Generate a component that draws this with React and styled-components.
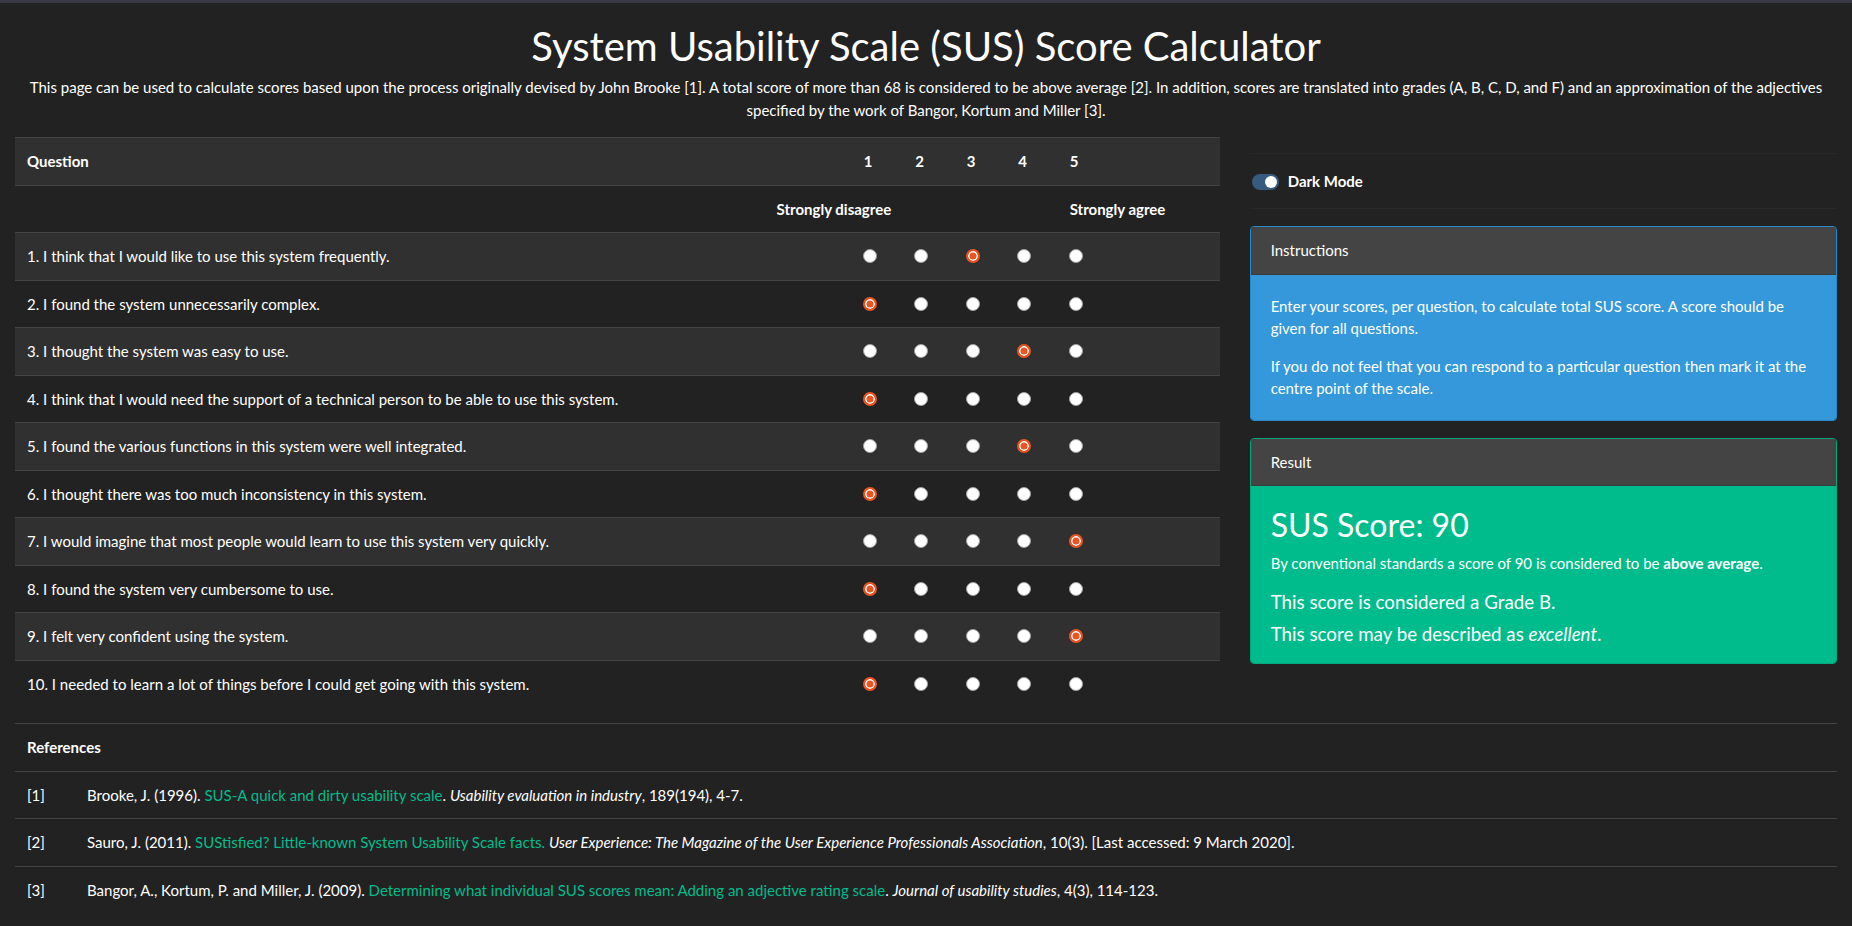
import React, { useState } from "react";
import styled, { createGlobalStyle } from "styled-components";

const GlobalStyle = createGlobalStyle`
  html, body {
    margin: 0;
    padding: 0;
    background: #222;
    overflow: hidden;
  }
  body {
    color: #fff;
    font-family: Lato, "Open Sans", sans-serif;
    font-size: 15px;
    line-height: 1.5;
  }
  * { box-sizing: border-box; }
`;

const questions = [
  "I think that I would like to use this system frequently.",
  "I found the system unnecessarily complex.",
  "I thought the system was easy to use.",
  "I think that I would need the support of a technical person to be able to use this system.",
  "I found the various functions in this system were well integrated.",
  "I thought there was too much inconsistency in this system.",
  "I would imagine that most people would learn to use this system very quickly.",
  "I found the system very cumbersome to use.",
  "I felt very confident using the system.",
  "I needed to learn a lot of things before I could get going with this system.",
];

const COLS = "1fr repeat(5, 51.5px) 110.5px";

const gradeFor = (s) => {
  if (s > 90) return "A";
  if (s > 80) return "B";
  if (s > 68) return "C";
  if (s > 51) return "D";
  return "F";
};

const adjectiveFor = (s) => {
  if (s >= 85.5) return "excellent";
  if (s >= 72.75) return "good";
  if (s >= 52) return "ok";
  if (s >= 39) return "poor";
  return "awful";
};

export default function App() {
  const [answers, setAnswers] = useState([3, 1, 4, 1, 4, 1, 5, 1, 5, 1]);
  const [dark, setDark] = useState(true);

  const score =
    answers.reduce((sum, a, i) => sum + (i % 2 === 0 ? a - 1 : 5 - a), 0) *
    2.5;

  const pick = (q, v) => {
    const next = [...answers];
    next[q] = v;
    setAnswers(next);
  };

  return (
    <>
      <GlobalStyle />
      <TopBar />
      <Page>
        <Title>System Usability Scale (SUS) Score Calculator</Title>
        <Intro>
          This page can be used to calculate scores based upon the process
          originally devised by John Brooke [1]. A total score of more than 68
          is considered to be above average [2]. In addition, scores are
          translated into grades (A, B, C, D, and F) and an approximation of
          the adjectives specified by the work of Bangor, Kortum and Miller [3].
        </Intro>

        <Columns>
          <MainCol>
            <QuestionTable>
              <QRow $shade>
                <Cell $bold>Question</Cell>
                {[1, 2, 3, 4, 5].map((n) => (
                  <Cell key={n} $bold>
                    {n}
                  </Cell>
                ))}
                <Cell />
              </QRow>
              <QRow>
                <Cell $bold $span={2} $align="right">
                  Strongly disagree
                </Cell>
                <Cell $span={3} />
                <Cell $bold $span={2}>
                  Strongly agree
                </Cell>
              </QRow>
              {questions.map((q, i) => (
                <QRow key={i} $shade={i % 2 === 0}>
                  <Cell>
                    {i + 1}. {q}
                  </Cell>
                  {[1, 2, 3, 4, 5].map((v) => (
                    <Cell key={v} $center>
                      <Radio
                        type="radio"
                        name={"q" + i}
                        checked={answers[i] === v}
                        onChange={() => pick(i, v)}
                      />
                    </Cell>
                  ))}
                  <Cell />
                </QRow>
              ))}
            </QuestionTable>
          </MainCol>

          <SideCol>
            <ToggleRow>
              <Switch>
                <input
                  type="checkbox"
                  checked={dark}
                  onChange={() => setDark(!dark)}
                />
                <Track $on={dark} />
                Dark Mode
              </Switch>
            </ToggleRow>

            <Card $border="#2d88c8">
              <CardHeader>Instructions</CardHeader>
              <CardBody $bg="#3498db">
                <CardText>
                  Enter your scores, per question, to calculate total SUS
                  score. A score should be given for all questions.
                </CardText>
                <CardText>
                  If you do not feel that you can respond to a particular
                  question then mark it at the centre point of the scale.
                </CardText>
              </CardBody>
            </Card>

            <Card $border="#00a87d">
              <CardHeader>Result</CardHeader>
              <CardBody $bg="#00bc8c" $top="21px" $bottom="17px">
                <Score>SUS Score: {score}</Score>
                <Verdict>
                  By conventional standards a score of {score} is considered to
                  be <b>{score > 68 ? "above average" : "below average"}</b>.
                </Verdict>
                <Lead>This score is considered a Grade {gradeFor(score)}.</Lead>
                <Lead>
                  This score may be described as <i>{adjectiveFor(score)}</i>.
                </Lead>
              </CardBody>
            </Card>
          </SideCol>
        </Columns>

        <RefTable>
          <RefRow>
            <Cell $bold $span={2}>
              References
            </Cell>
          </RefRow>
          <RefRow>
            <Cell>[1]</Cell>
            <Cell>
              Brooke, J. (1996). <Link href="#">SUS-A quick and dirty usability scale</Link>.{" "}
              <i>Usability evaluation in industry</i>, 189(194), 4-7.
            </Cell>
          </RefRow>
          <RefRow>
            <Cell>[2]</Cell>
            <Cell>
              Sauro, J. (2011).{" "}
              <Link href="#">SUStisfied? Little-known System Usability Scale facts.</Link>{" "}
              <i>
                User Experience: The Magazine of the User Experience
                Professionals Association
              </i>
              , 10(3). [Last accessed: 9 March 2020].
            </Cell>
          </RefRow>
          <RefRow>
            <Cell>[3]</Cell>
            <Cell>
              Bangor, A., Kortum, P. and Miller, J. (2009).{" "}
              <Link href="#">
                Determining what individual SUS scores mean: Adding an
                adjective rating scale
              </Link>
              . <i>Journal of usability studies</i>, 4(3), 114-123.
            </Cell>
          </RefRow>
        </RefTable>
      </Page>
    </>
  );
}

const TopBar = styled.div`
  height: 3px;
  background: #383846;
`;

const Page = styled.div`
  padding: 0 15px;
`;

const Title = styled.h1`
  margin: 19px 0 6px;
  font-size: 40px;
  font-weight: 400;
  line-height: 48px;
  text-align: center;
`;

const Intro = styled.p`
  margin: 0 0 16px;
  text-align: center;
`;

const Columns = styled.div`
  display: flex;
  margin: 0 -15px;
`;

const MainCol = styled.div`
  flex: 0 0 66.6667%;
  max-width: 66.6667%;
  padding: 0 15px;
`;

const SideCol = styled.div`
  flex: 0 0 33.3333%;
  max-width: 33.3333%;
  padding: 16px 15px 0;
`;

const QuestionTable = styled.div`
  margin-bottom: 16px;
`;

const QRow = styled.div`
  display: grid;
  grid-template-columns: ${COLS};
  border-top: 1px solid #444;
  background: ${(p) => (p.$shade ? "#303030" : "transparent")};
`;

const Cell = styled.div`
  padding: 12px;
  min-height: 46.5px;
  font-weight: ${(p) => (p.$bold ? 700 : 400)};
  text-align: ${(p) => p.$align || "left"};
  grid-column: ${(p) => (p.$span ? `span ${p.$span}` : "auto")};
  display: ${(p) => (p.$center ? "flex" : "block")};
  align-items: center;
`;

const Radio = styled.input`
  appearance: none;
  margin: 0 0 0 -1px;
  width: 14px;
  height: 14px;
  border-radius: 50%;
  border: 1px solid #a0a0a0;
  background: #fff;
  cursor: pointer;

  &:checked {
    border: 2px solid #e95420;
    background: #e95420;
    box-shadow: inset 0 0 0 1.5px #fff;
  }
`;

const ToggleRow = styled.div`
  height: 56px;
  display: flex;
  align-items: center;
  padding: 1px 0 0 2px;
  border-top: 1px solid #282828;
  border-bottom: 1px solid #282828;
  margin-bottom: 17px;
`;

const Switch = styled.label`
  display: flex;
  align-items: center;
  gap: 9px;
  font-weight: 700;
  cursor: pointer;

  input {
    display: none;
  }
`;

const Track = styled.span`
  position: relative;
  width: 27px;
  height: 16px;
  border-radius: 8px;
  background: ${(p) => (p.$on ? "#375a7f" : "#555")};

  &::after {
    content: "";
    position: absolute;
    top: 2px;
    left: ${(p) => (p.$on ? "13px" : "2px")};
    width: 12px;
    height: 12px;
    border-radius: 50%;
    background: #fff;
  }
`;

const Card = styled.div`
  border: 1px solid ${(p) => p.$border};
  border-radius: 4px;
  overflow: hidden;
  margin-bottom: 17px;
`;

const CardHeader = styled.div`
  background: #444;
  padding: 12px 20px;
  border-bottom: 1px solid rgba(0, 0, 0, 0.125);
`;

const CardBody = styled.div`
  background: ${(p) => p.$bg};
  padding: ${(p) => p.$top || "20px"} 20px ${(p) => p.$bottom || "20px"};
`;

const CardText = styled.p`
  margin: 0 0 15px;
  &:last-child {
    margin-bottom: 0;
  }
`;

const Score = styled.h2`
  margin: 0 0 9px;
  font-size: 32px;
  font-weight: 400;
  line-height: 36px;
`;

const Verdict = styled.p`
  margin: 0 0 14px;
`;

const Lead = styled.p`
  margin: 0 0 7px;
  font-size: 18.75px;
  line-height: 25px;
  &:last-child {
    margin-bottom: 0;
  }
`;

const RefTable = styled.div``;

const RefRow = styled.div`
  display: grid;
  grid-template-columns: 60px 1fr;
  border-top: 1px solid #444;
`;

const Link = styled.a`
  color: #00bc8c;
  text-decoration: none;
`;
